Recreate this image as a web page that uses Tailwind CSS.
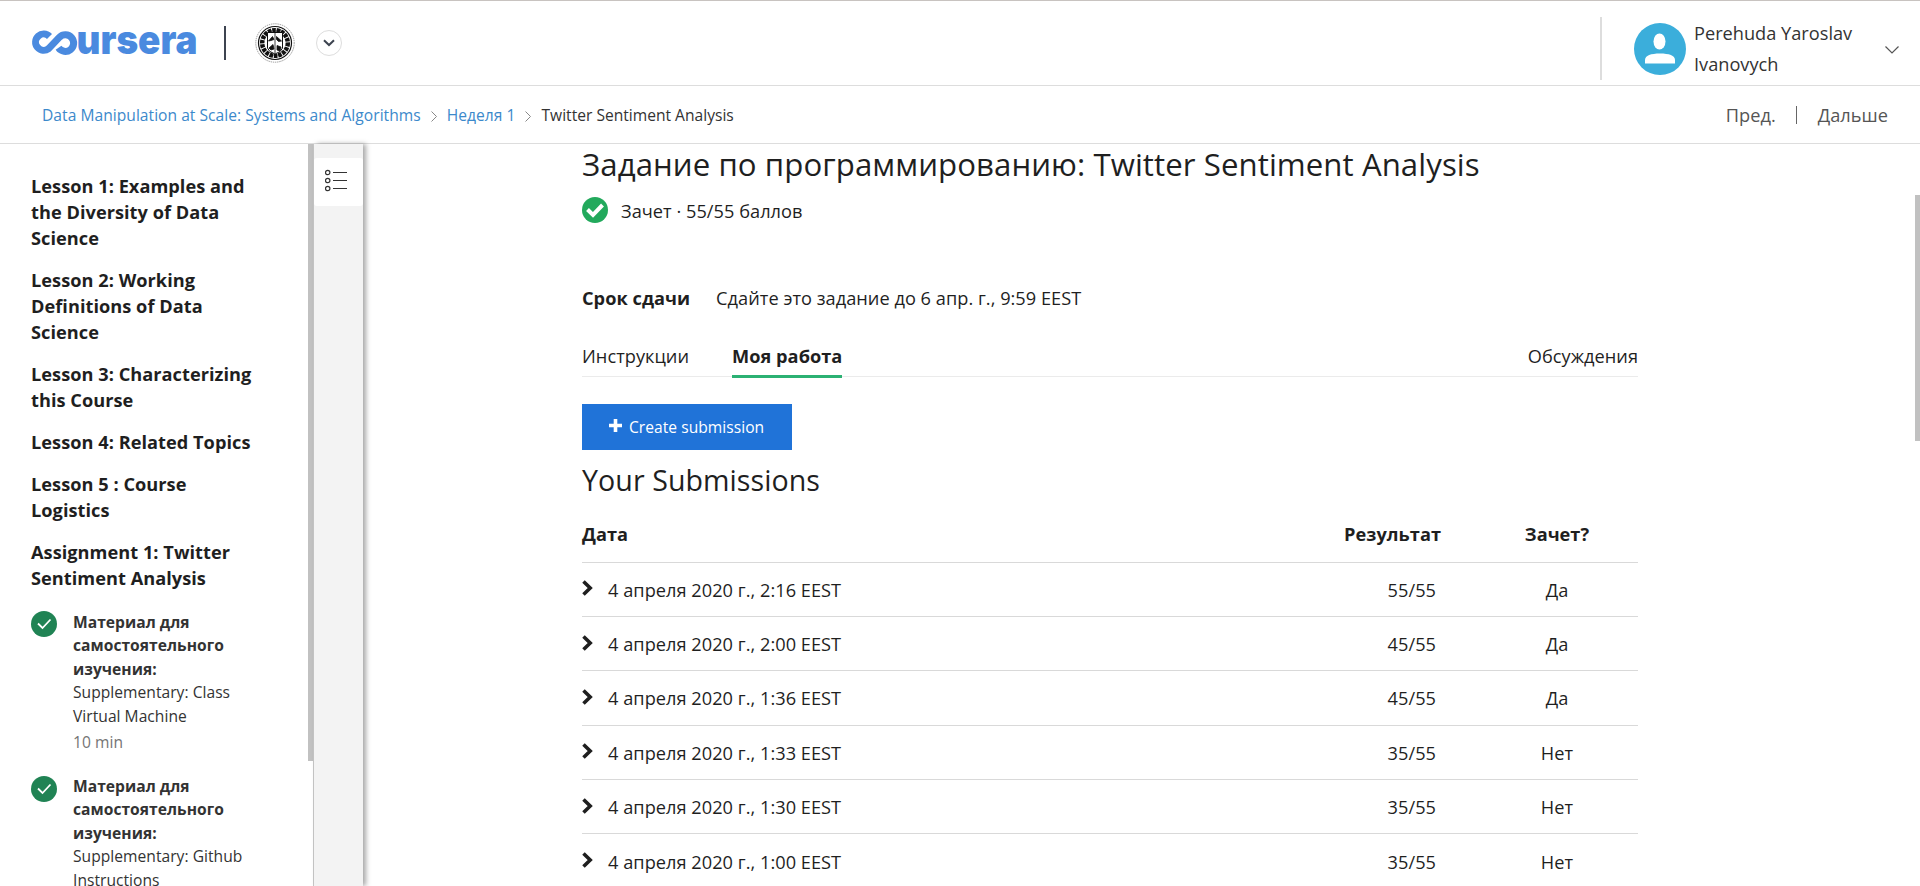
<!DOCTYPE html>
<html lang="ru">
<head>
<meta charset="utf-8">
<title>Twitter Sentiment Analysis | Coursera</title>
<script src="https://cdn.jsdelivr.net/npm/@tailwindcss/browser@4"></script>
</head>
<body class="h-[886px] overflow-hidden bg-white text-[18.2px] tracking-[0.03px] text-[#1f1f1f] font-['Open_Sans',sans-serif]">
<div class="relative flex h-full flex-col">
  <header class="flex h-[86px] shrink-0 items-start justify-between border-t border-b border-t-[#c8c3c0] border-b-[#ddd]">
    <div class="flex items-center pl-[31px] pt-[22px]">
      <svg class="h-[40px] w-[167px] overflow-visible" viewBox="0 0 167 40" aria-label="coursera">
        <path d="M18.500 13.500A8.100 8.100 0 1 0 17.600 25.600L28.500 14.200A8.300 8.300 0 1 1 27.500 24.800" fill="none" stroke="#4a8adf" stroke-width="7"/>
        <text x="45.500" y="30.800" font-family="Inter" font-weight="900" font-size="40.500" letter-spacing="0" textLength="121" lengthAdjust="spacingAndGlyphs" fill="#4a8adf">ursera</text>
      </svg>
      <div class="ml-[26px] h-[34px] w-0.5 bg-[#3d4450]"></div>
      <svg class="ml-[29px] size-10" viewBox="0 0 40 40" fill="none" stroke="#111">
        <circle cx="20" cy="20" r="19.200" stroke-width="1" stroke-dasharray="1.400 .8" stroke="#999"/>
        <circle cx="20" cy="20" r="16.500" stroke-width="1.200"/>
        <circle cx="20" cy="20" r="12.800" stroke-width="4.500" stroke-dasharray="3.500 .9"/>
        <path d="M12.500 9.500h15v15.500q-1 4-7.500 6-6.500-2-7.500-6z" fill="#fff" stroke-width="1"/>
        <path d="M20 10v20M13.500 18l4-4.500 1.500 3-3 1zM21.500 13.500l5 4.500-3 .5-2-2zM14 25l4-3.500 1 4.500-3 1zM22 22.500l4 1.500-1 4-3-1zM14 8h12M15 32h10" fill="#111" stroke-width=".8"/>
      </svg>
      <div class="ml-[21px] flex size-[26px] items-center justify-center rounded-full border border-[#ddd]">
        <svg class="h-2 w-3" viewBox="0 0 12 8" fill="none" stroke="#3d4450" stroke-width="2"><path d="M1 1.200 6 6l5-4.800"/></svg>
      </div>
    </div>
    <div class="flex pt-4">
      <div class="h-[63px] w-0.5 bg-[#ddd]"></div>
      <svg class="ml-8 mt-[6px] size-[52px]" viewBox="0 0 52 52"><circle cx="26" cy="26" r="26" fill="#3baedb"/><ellipse cx="25.500" cy="18.500" rx="6" ry="8" fill="#fff"/><path d="M11 40.500v-3.500c0-4.500 6-6.500 15-6.500s15 2 15 6.500v3.500z" fill="#fff"/></svg>
      <div class="ml-2 mt-px w-[191px] leading-[31.2px] tracking-normal text-[#333]">Perehuda Yaroslav<br>Ivanovych</div>
      <svg class="mr-[21px] mt-[29px] h-2 w-[14px]" viewBox="0 0 14 8" fill="none" stroke="#555" stroke-width="1.200"><path d="M.5.500 7 7 13.500.500"/></svg>
    </div>
  </header>
  <nav class="flex h-[58px] shrink-0 items-center justify-between border-b border-[#ddd] pl-[42px] pr-8 pt-0.5">
    <div class="flex items-center text-[15.6px] text-[#3c89cb]">
      <a>Data Manipulation at Scale: Systems and Algorithms</a>
      <svg class="mx-[10px] mt-0.5 h-[11px] w-[6px]" viewBox="0 0 6 11" fill="none" stroke="#888"><path d="m.5.500 5 5-5 5"/></svg>
      <a>Неделя 1</a>
      <svg class="mx-[10.500px] mx-[10px] mt-0.5 h-[11px] w-[6px]" viewBox="0 0 6 11" fill="none" stroke="#888"><path d="m.5.500 5 5-5 5"/></svg>
      <span class="text-[#333] tracking-normal">Twitter Sentiment Analysis</span>
    </div>
    <div class="flex items-center text-[#555]"><a>Пред.</a><span class="ml-5 mr-[21px] h-[18px] w-px bg-[#666]"></span><a>Дальше</a></div>
  </nav>
  <div class="flex min-h-0 flex-1">
    <aside class="flex w-[314px] shrink-0 overflow-hidden border-r border-[#c8c8c8]">
      <div class="w-[308px] shrink-0 pl-[31px] pt-[29px]">
        <div class="flex w-[230px] flex-col gap-4 font-bold leading-[26px]">
          <h3>Lesson 1: Examples and the Diversity of Data Science</h3>
          <h3>Lesson 2: Working Definitions of Data Science</h3>
          <h3>Lesson 3: Characterizing this Course</h3>
          <h3>Lesson 4: Related Topics</h3>
          <h3>Lesson 5 : Course Logistics</h3>
          <h3>Assignment 1: Twitter Sentiment Analysis</h3>
        </div>
        <div class="mt-5 flex flex-col gap-[18px] text-[15.6px] leading-[23.4px] text-[#333]">
          <div class="flex h-[146px] gap-4">
            <svg class="size-[26px] shrink-0" viewBox="0 0 26 26"><circle cx="13" cy="13" r="13" fill="#208354"/><path d="m7 12.500 4.500 4.500 8-8.500" fill="none" stroke="#fff" stroke-width="1.800"/></svg>
            <div class="w-[180px]"><b>Материал для самостоятельного изучения:</b><br>Supplementary: Class Virtual Machine<p class="mt-[3px] text-[#757575]">10 min</p></div>
          </div>
          <div class="flex h-[146px] gap-4">
            <svg class="mt-[1px] size-[26px] shrink-0" viewBox="0 0 26 26"><circle cx="13" cy="13" r="13" fill="#208354"/><path d="m7 12.500 4.500 4.500 8-8.500" fill="none" stroke="#fff" stroke-width="1.800"/></svg>
            <div class="w-[180px]"><b>Материал для самостоятельного изучения:</b><br>Supplementary: Github Instructions</div>
          </div>
        </div>
      </div>
      <div class="h-[617px] w-[6px] shrink-0 bg-[#c1c1c1]"></div>
    </aside>
    <div class="w-[49px] shrink-0 bg-[#f3f3f3] pt-[14px] shadow-[3px_0_5px_rgba(0,0,0,0.35)]">
      <div class="flex h-12 items-center rounded-[3px] bg-white pb-1 pl-[11px]">
        <svg class="h-[23px] w-[22px]" viewBox="0 0 22 23" fill="none" stroke="#333" stroke-width="1.200"><circle cx="2.700" cy="3.500" r="2.200"/><circle cx="2.700" cy="11.500" r="2.200"/><circle cx="2.700" cy="19.500" r="2.200"/><path d="M8 3.500h14M8 11.500h14M8 19.500h14"/></svg>
      </div>
    </div>
    <main class="ml-[219px] w-[1056px] shrink-0">
      <h1 class="h-[42px] whitespace-nowrap text-[31.2px] leading-[41px] tracking-[0.065px]">Задание по программированию: Twitter Sentiment Analysis</h1>
      <div class="mt-[11px] flex h-[26px] items-center gap-[13px]">
        <svg class="size-[26px]" viewBox="0 0 26 26"><circle cx="13" cy="13" r="13" fill="#22a95c"/><path d="m5.500 12.500 5.500 5.500 9.500-10" fill="none" stroke="#fff" stroke-width="4"/></svg>
        <span class="mt-[4px]">Зачет · 55/55 баллов</span>
      </div>
      <div class="mt-[48px] flex h-[53px] items-center gap-[26px] leading-[26px]"><b>Срок сдачи</b><span>Сдайте это задание до 6 апр. г., 9:59 EEST</span></div>
      <div class="flex h-[53px] justify-between border-b border-[#ebebeb] leading-[26px]">
        <div class="flex gap-[43px]"><span class="pt-[19px]">Инструкции</span><b class="-mb-0.5 border-b-3 border-[#2bb173] pt-[19px]">Моя работа</b></div>
        <span class="pt-[19px]">Обсуждения</span>
      </div>
      <button class="mt-[27px] flex h-[46px] w-[210px] items-center bg-[#2073d8] pl-[27px] pt-0.5 text-[15.6px] tracking-[0.03px] text-white">
        <svg class="mb-[5px] mr-[7px] size-[13px]" viewBox="0 0 13 13"><path d="M4.700 0h3.600v4.700H13v3.600H8.300V13H4.700V8.300H0V4.700h4.700z" fill="#fff"/></svg>Create submission
      </button>
      <h2 class="mt-[10px] text-[28.6px] leading-[39px] tracking-[0.06px]">Your Submissions</h2>
      <table class="mt-[6px] w-full table-fixed border-collapse">
        <colgroup><col class="w-[716px]"><col class="w-[178px]"><col class="w-[162px]"></colgroup>
        <thead><tr class="h-[57px] border-b border-[#d9d9d9]"><th class="pt-[3px] text-left">Дата</th><th class="pr-[35px] pt-[3px] text-right">Результат</th><th class="pt-[3px]">Зачет?</th></tr></thead>
        <tbody id="rows"></tbody>
      </table>
    </main>
  </div>
  <div class="absolute right-0 top-[195px] h-[246px] w-[5px] bg-[#c1c1c1]"></div>
</div>
<script>
document.getElementById('rows').innerHTML = [['2:16','55','Да'],['2:00','45','Да'],['1:36','45','Да'],['1:33','35','Нет'],['1:30','35','Нет'],['1:00','35','Нет']].map(([time, score, pass]) => `
<tr class="h-[54.4px] border-b border-[#d9d9d9]"><td class="pt-0.5"><div class="flex items-center"><svg class="mb-1 mr-[15px] h-4 w-[11px]" viewBox="0 0 11 16" fill="none" stroke="#1f1f1f" stroke-width="3.600"><path d="m1.500 1.500 6.700 6.500-6.700 6.500"/></svg>4 апреля 2020 г., ${time} EEST</div></td><td class="pr-10 pt-0.5 text-right">${score}/55</td><td class="pt-0.5 text-center">${pass}</td></tr>`).join('');
</script>
</body>
</html>
